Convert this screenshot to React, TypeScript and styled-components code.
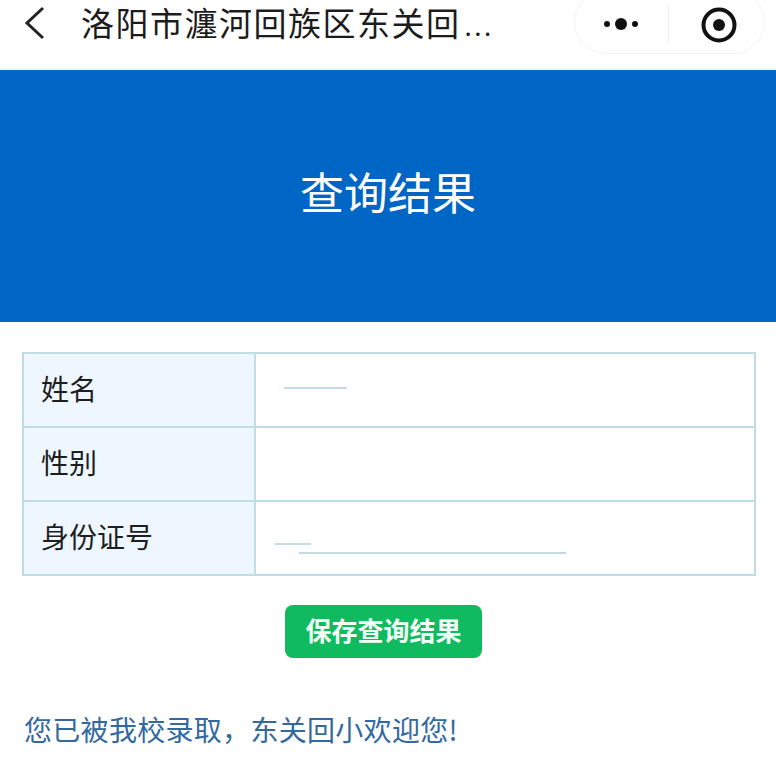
import React from 'react';
import styled, { createGlobalStyle } from 'styled-components';

const cjk = '"Noto Sans CJK SC", "Liberation Sans", sans-serif';

const GlobalStyle = createGlobalStyle`
  html, body {
    margin: 0;
    padding: 0;
    background: #fff;
    font-family: ${cjk};
  }
`;

const rows = [
  { label: '姓名', kind: 'name' },
  { label: '性别', kind: 'empty' },
  { label: '身份证号', kind: 'id' },
];

export default function App() {
  return (
    <Page>
      <GlobalStyle />
      <NavBar>
        <BackIcon width="24" height="34" viewBox="0 0 24 34">
          <path d="M21 2 L5 17 L21 32" fill="none" stroke="#222" strokeWidth="3" />
        </BackIcon>
        <NavTitle>
          洛阳市瀍河回族区东关回<Ellipsis>...</Ellipsis>
        </NavTitle>
        <Capsule>
          <Dots>
            <Dot $size={6} />
            <Dot $size={12} />
            <Dot $size={6} />
          </Dots>
          <CapsuleDivider />
          <TargetIcon width="36" height="36" viewBox="0 0 36 36">
            <circle cx="18" cy="18" r="15.5" fill="none" stroke="#111" strokeWidth="4" />
            <circle cx="18" cy="18" r="6" fill="#111" />
          </TargetIcon>
        </Capsule>
      </NavBar>

      <Banner>查询结果</Banner>

      <ResultTable>
        {rows.map((row) => (
          <Row key={row.label}>
            <LabelCell>{row.label}</LabelCell>
            <ValueCell>
              {row.kind === 'name' && <Redacted $width={63} $left={28} $top={33} />}
              {row.kind === 'id' && (
                <>
                  <Redacted $width={36} $left={19} $top={41} />
                  <Redacted $width={267} $left={43} $top={7} />
                </>
              )}
            </ValueCell>
          </Row>
        ))}
      </ResultTable>

      <ButtonRow>
        <SaveButton>保存查询结果</SaveButton>
      </ButtonRow>

      <Welcome>您已被我校录取，东关回小欢迎您!</Welcome>
    </Page>
  );
}

const Page = styled.div`
  width: 776px;
  height: 758px;
  overflow: hidden;
  background: #fff;
`;

const NavBar = styled.div`
  height: 70px;
  box-sizing: border-box;
  display: flex;
  align-items: flex-start;
  padding: 5px 11px 0 22px;
  border-bottom: 2px solid #effbfb;
`;

const BackIcon = styled.svg`
  flex: none;
  margin: 1px 35px 0 0;
`;

const NavTitle = styled.div`
  flex: 1;
  margin-top: -2px;
  font-size: 33px;
  line-height: 38px;
  letter-spacing: 1.5px;
  color: #1c1c1c;
  white-space: nowrap;
`;

const Ellipsis = styled.span`
  margin-left: 4px;
  font-size: 26px;
  letter-spacing: 2.5px;
`;

const Capsule = styled.div`
  flex: none;
  width: 191px;
  height: 64px;
  box-sizing: border-box;
  margin-top: -15px;
  padding: 3px 27px 0 29px;
  display: flex;
  align-items: center;
  border: 1px solid #f3f3f3;
  border-radius: 32px;
`;

const Dots = styled.div`
  width: 36px;
  display: flex;
  align-items: center;
  justify-content: space-between;
`;

const Dot = styled.span<{ $size: number }>`
  width: ${(p) => p.$size}px;
  height: ${(p) => p.$size}px;
  border-radius: 50%;
  background: #111;
`;

const CapsuleDivider = styled.div`
  width: 1px;
  height: 38px;
  margin: 0 32px 0 30px;
  background: #eeeeee;
`;

const TargetIcon = styled.svg`
  flex: none;
  margin-top: 2px;
`;

const Banner = styled.div`
  height: 252px;
  box-sizing: border-box;
  padding-bottom: 10px;
  display: flex;
  align-items: center;
  justify-content: center;
  background: #0066c6;
  color: #fff;
  font-size: 44px;
`;

const ResultTable = styled.div`
  width: 734px;
  box-sizing: border-box;
  margin: 30px 0 0 22px;
  border: 2px solid #c0dce4;
  border-bottom-width: 0;
`;

const Row = styled.div`
  height: 74px;
  box-sizing: border-box;
  display: flex;
  border-bottom: 2px solid #c0dce4;
`;

const LabelCell = styled.div`
  width: 232px;
  flex: none;
  box-sizing: border-box;
  padding: 0 0 4px 17px;
  display: flex;
  align-items: center;
  background: #eef7ff;
  border-right: 2px solid #c0dce4;
  color: #1e1e1e;
  font-size: 28px;
`;

const ValueCell = styled.div`
  flex: 1;
  display: flex;
  flex-direction: column;
`;

const Redacted = styled.div<{ $width: number; $left: number; $top: number }>`
  flex: none;
  width: ${(p) => p.$width}px;
  height: 2px;
  margin-left: ${(p) => p.$left}px;
  margin-top: ${(p) => p.$top}px;
  background: #c4dae3;
`;

const ButtonRow = styled.div`
  display: flex;
  margin: 29px 0 0 285px;
`;

const SaveButton = styled.button`
  width: 197px;
  height: 53px;
  padding: 0 0 5px;
  border: none;
  border-radius: 8px;
  background: #0fbb5e;
  color: #f4fff8;
  font-family: ${cjk};
  font-size: 26px;
  font-weight: 700;
`;

const Welcome = styled.div`
  margin: 49px 0 0 24px;
  color: #33699f;
  font-size: 28px;
  letter-spacing: 0.3px;
  line-height: 44px;
  white-space: nowrap;
`;
